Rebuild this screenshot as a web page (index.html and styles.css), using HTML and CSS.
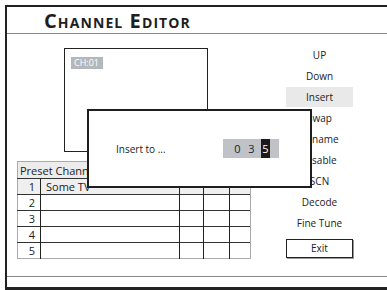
FILE: index.html
```html
<!DOCTYPE html>
<html lang="en">
<head>
    <meta charset="UTF-8">
    <title>Channel Editor</title>
    <link rel="stylesheet" href="styles.css">
</head>
<body>
<div class="screen">
    <div class="title-bar"><h1>Channel Editor</h1></div>
    <div class="main">
        <div class="left">
            <div class="preview"><span class="ch-label">CH:01</span></div>
            <table class="channels">
                <tr class="head"><td colspan="5">Preset Channel List</td></tr>
                <tr class="sel"><td class="num">1</td><td class="name">Some TV</td><td></td><td></td><td></td></tr>
                <tr><td class="num">2</td><td class="name"></td><td></td><td></td><td></td></tr>
                <tr><td class="num">3</td><td class="name"></td><td></td><td></td><td></td></tr>
                <tr><td class="num">4</td><td class="name"></td><td></td><td></td><td></td></tr>
                <tr><td class="num">5</td><td class="name"></td><td></td><td></td><td></td></tr>
            </table>
        </div>
        <ul class="menu">
            <li>UP</li>
            <li>Down</li>
            <li class="active">Insert</li>
            <li>Swap</li>
            <li>Rename</li>
            <li>Disable</li>
            <li>SCN</li>
            <li>Decode</li>
            <li>Fine Tune</li>
            <li class="exit">Exit</li>
        </ul>
    </div>
    <div class="footer"></div>

    <div class="dialog">
        <span class="dialog-label">Insert to ...</span>
        <div class="digits">
            <span>0</span><span>3</span><span class="cur">5</span>
        </div>
    </div>
</div>
</body>
</html>
```

FILE: styles.css
```css
body {
    margin: 0;
    overflow: hidden;
    background: #fff;
    font-family: 'Open Sans', 'DejaVu Sans', sans-serif;
    color: #222;
}
.screen {
    position: relative;
    margin: 5px 0 0 5px;
    width: 380px;
    height: 280px;
    border-left: 2px solid #222;
    border-top: 2px solid #222;
    border-bottom: 3px solid #222;
}
.title-bar {
    height: 26px;
    border-bottom: 1px solid #888;
}
.title-bar h1 {
    margin: 0;
    padding-left: 37px;
    font-size: 20px;
    line-height: 27px;
    font-weight: 700;
    font-variant: small-caps;
    letter-spacing: 1.1px;
    color: #1e1e1e;
}
.main {
    display: flex;
    height: 242px;
    border-bottom: 1px solid #888;
}
.left {
    width: 234px;
    padding-left: 10px;
}
.preview {
    box-sizing: border-box;
    width: 144px;
    height: 104px;
    margin: 14px 0 0 47px;
    border: 1.5px solid #222;
    padding: 8px 0 0 6px;
}
.ch-label {
    display: block;
    width: fit-content;
    background: #b4b7bc;
    color: #fff;
    font-size: 9px;
    line-height: 12px;
    padding: 0 4px 0 3px;
}
.channels {
    margin-top: 9px;
    width: 234px;
    border-collapse: collapse;
    border-left: 1px solid #aaa;
    border-bottom: 1.5px solid #aaa;
    font-size: 11px;
}
.channels td {
    height: 15px;
    padding: 0;
    border-top: 1px solid #333;
    border-right: 1px solid #222;
    line-height: 15px;
}
.channels tr.head td {
    background: #ececec;
    border-top: 1px solid #aaa;
    border-right: 1px solid #aaa;
    padding-left: 2px;
    height: 16px;
}
.channels tr.sel td {
    background: #efefef;
}
.channels td.num {
    width: 23px;
    text-align: right;
    padding-right: 5px;
    box-sizing: border-box;
}
.channels td.name {
    width: 139px;
    padding-left: 5px;
    box-sizing: border-box;
}
.channels td:nth-child(3) { width: 23px; }
.channels td:nth-child(4) { width: 25px; }
.channels td:nth-child(5) { border-right-color: #aaa; }

.menu {
    list-style: none;
    margin: 11px 0 0 35px;
    padding: 0;
    width: 67px;
    font-size: 10px;
}
.menu li {
    height: 21px;
    line-height: 21px;
    text-align: center;
}
.menu li.active {
    background: #e9e9e9;
    height: 20px;
    line-height: 20px;
    margin-bottom: 1px;
}
.menu li.exit {
    box-sizing: border-box;
    margin-top: 5px;
    height: 19px;
    line-height: 16px;
    border: 1.5px solid #222;
    box-shadow: 1px 1px 0 #999;
}
.footer {
    height: 10px;
}

.dialog {
    position: absolute;
    left: 80px;
    top: 102px;
    box-sizing: border-box;
    width: 225px;
    height: 79px;
    background: #fff;
    border: 2.5px solid #1e1e1e;
    display: flex;
    align-items: center;
    padding-left: 27px;
    font-size: 10px;
}
.dialog-label {
    width: 107px;
}
.digits {
    box-sizing: border-box;
    display: flex;
    justify-content: flex-end;
    gap: 5px;
    width: 56px;
    height: 19px;
    padding-right: 9px;
    background: #bfc2c7;
    font-size: 11px;
    line-height: 19px;
}
.digits span {
    width: 9px;
    text-align: center;
}
.digits span.cur {
    background: #1a1a1a;
    color: #fff;
}
```
